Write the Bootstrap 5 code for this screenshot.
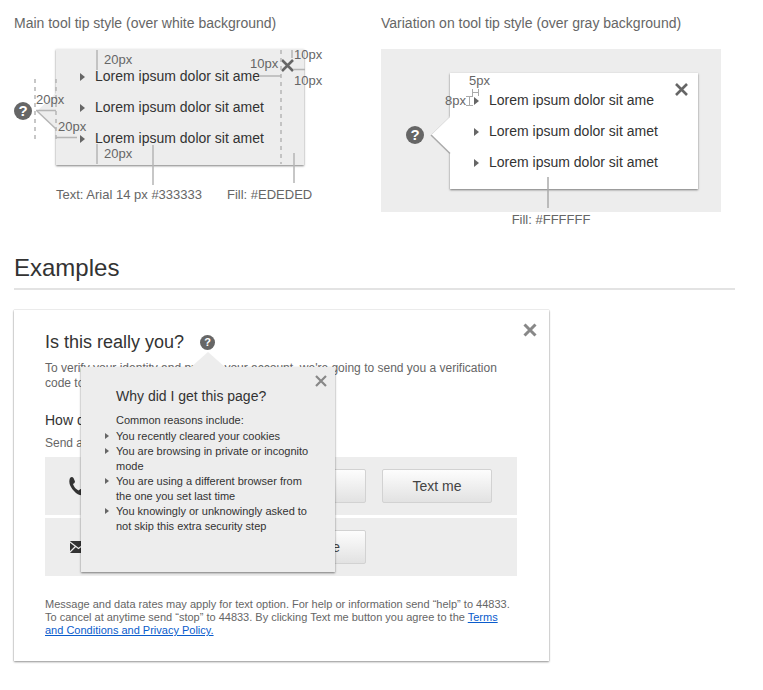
<!DOCTYPE html>
<html lang="en">
<head>
<meta charset="utf-8">
<meta name="viewport" content="width=device-width, initial-scale=1">
<title>Tool tip styles</title>
<link href="https://cdn.jsdelivr.net/npm/bootstrap@5.3.0/dist/css/bootstrap.min.css" rel="stylesheet">
<style>
  body { font-family: "Liberation Sans", Arial, sans-serif; font-size: 14px; line-height: 18px; color: #333; background: #fff; }
  svg { display: block; }
  .page { padding: 14px 28px 24px 14px; }
  .specs { display: grid; grid-template-columns: 1fr 340px; column-gap: 16px; padding-right: 14px; }
  .spec-title { font-size: 14px; line-height: 18px; font-weight: 400; color: #666; margin: 0 0 17px; }
  .annot { font-size: 13px; line-height: 16px; color: #666; white-space: nowrap; }
  .stage-white { min-height: 137px; }
  .stage-gray { background: #ededed; padding: 24px 24px 23px 25px; }
  .stage-gray .help { margin-right: 26px; }
  .captions { margin: 22px 0 0 42px; gap: 25px; }
  .help { width: 18px; height: 18px; padding: 0; border: 0; border-radius: 50%; background: #666; color: #fff; font-weight: 700; font-size: 15px; line-height: 18px; text-align: center; flex: none; }
  .help-sm { width: 15px; height: 15px; font-size: 11px; line-height: 15px; }
  .tip { background: #ededed; box-shadow: 0 1px 2px rgba(0,0,0,.5); }
  .tip-white { background: #fff; }
  .tip-side { padding: 12px 40px 11px 39px; }
  .tip-list { list-style: none; margin: 0; padding: 0; }
  .tip-side li { line-height: 31px; position: relative; white-space: nowrap; }
  .tip-list li::before { content: ""; position: absolute; border-style: solid; border-color: transparent transparent transparent #666; }
  .tip-side li::before { left: -15px; top: 12px; border-width: 4px 0 4px 5px; }
  .arrow-left { position: absolute; left: -20px; top: 42px; }
  .arrow-up { position: absolute; left: 109px; top: -15px; }
  .x-btn { position: absolute; right: 10px; top: 10px; padding: 0; border: 0; background: none; }
  .dialog-box > .x-btn { right: 12px; top: 13px; }
  .why .x-btn { right: 8px; top: 8px; }
  .lines { position: absolute; left: 0; top: 0; overflow: visible; pointer-events: none; }
  .at { position: absolute; }
  .at-top { left: 90px; top: 3px; }
  .at-arrow { left: 22px; top: 43px; }
  .at-indent { left: 44px; top: 70px; }
  .at-bottom { left: 90px; top: 97px; }
  .at-x-left { left: 236px; top: 7px; }
  .at-x-top { left: 280px; top: -2px; }
  .at-x-right { left: 280px; top: 24px; }
  .at-mark-w { left: 88px; top: 24px; }
  .at-mark-h { left: 64px; top: 44px; }
  .examples-title { font-size: 24px; line-height: 30px; font-weight: 400; margin: 25px 0 20px; padding-bottom: 5px; border-bottom: 2px solid #e3e3e3; }
  .dialog-box { max-width: 535px; padding: 21px 32px 24px 31px; background: #fff; box-shadow: 0 1px 2px rgba(0,0,0,.4), 0 0 1px rgba(0,0,0,.3); }
  .dialog-title { font-size: 18px; line-height: 22px; font-weight: 400; margin: 0; }
  .body-copy { font-size: 12px; line-height: 15px; color: #666; margin: 0; }
  .question { font-size: 14px; line-height: 18px; font-weight: 400; margin: 20px 0 7px; }
  .options { gap: 3px; margin-top: 6px; }
  .option { background: #ededed; height: 58px; padding: 0 25px 0 24px; }
  .soft-btn { width: 110px; height: 34px; padding: 0; font-size: 14px; line-height: 18px; color: #444; border: 1px solid #d2d2d2; border-radius: 2px; background: linear-gradient(#fdfdfd, #e2e2e2); }
  .mail-btn { margin-right: 126px; }
  .legal { font-size: 11px; line-height: 13px; color: #666; margin: 22px -24px 0 0; }
  .legal a { color: #0a5ccc; }
  .why { position: absolute; left: 67px; top: 57px; width: 254px; padding: 19px 20px 38px 35px; }
  .why-title { font-size: 14px; line-height: 20px; font-weight: 400; margin: 0 0 7px; }
  .why-copy { font-size: 11px; line-height: 15px; margin: 0 0 1px; color: #333; }
  .why li { position: relative; font-size: 11px; line-height: 15px; }
  .why li::before { left: -11px; top: 4px; border-width: 3px 0 3px 4px; }
</style>
<script src="https://cdn.jsdelivr.net/npm/bootstrap@5.3.0/dist/js/bootstrap.bundle.min.js"></script>
</head>
<body>
<main class="page">
  <div class="specs">
    <section>
      <h2 class="spec-title">Main tool tip style (over white background)</h2>
      <div class="stage-white position-relative">
        <div class="d-flex align-items-center">
          <button class="help mt-2" type="button" aria-label="Help">?</button>
          <div class="tip tip-side position-relative ms-4">
            <svg class="arrow-left" width="21" height="40" viewBox="0 0 21 40" aria-hidden="true"><path d="M21 1L1 20L21 39Z" fill="#ededed"/><path d="M1 20L20 38" stroke="#b5b5b5" stroke-width="1.5" fill="none"/></svg>
            <ul class="tip-list">
              <li>Lorem ipsum dolor sit ame</li>
              <li>Lorem ipsum dolor sit amet</li>
              <li>Lorem ipsum dolor sit amet</li>
            </ul>
            <button class="x-btn" type="button" aria-label="Close"><svg width="13" height="13" viewBox="0 0 13 13"><path d="M1 1L12 12M12 1L1 12" stroke="#666" stroke-width="2.6"/></svg></button>
          </div>
        </div>
        <svg class="lines" width="300" height="146" viewBox="14 49 300 146" fill="none" stroke="#b5b5b5" stroke-width="1.5" aria-hidden="true">
          <path d="M97 50V70M97 144V164M36 110.500H56M56 137.500H77M259 76H281M292 50V58M293 69.500H305M153 145V185M294 153V183"/>
          <path d="M35 79V139M56 79V139M281 50V164" stroke-dasharray="4 4"/>
        </svg>
        <span class="annot at at-top">20px</span>
        <span class="annot at at-arrow">20px</span>
        <span class="annot at at-indent">20px</span>
        <span class="annot at at-bottom">20px</span>
        <span class="annot at at-x-left">10px</span>
        <span class="annot at at-x-top">10px</span>
        <span class="annot at at-x-right">10px</span>
        <div class="annot captions d-flex"><span>Text: Arial 14 px #333333</span><span>Fill: #EDEDED</span></div>
      </div>
    </section>
    <section>
      <h2 class="spec-title">Variation on tool tip style (over gray background)</h2>
      <div class="position-relative">
        <div class="stage-gray d-flex align-items-center">
          <button class="help mt-2" type="button" aria-label="Help">?</button>
          <div class="tip tip-white tip-side position-relative flex-grow-1">
            <svg class="arrow-left" width="21" height="40" viewBox="0 0 21 40" aria-hidden="true"><path d="M21 1L1 20L21 39Z" fill="#fff"/><path d="M1 20L20 38.500" stroke="#aaa" stroke-width="1.5" fill="none"/><path d="M1 20L20 1.500" stroke="#ddd" fill="none"/></svg>
            <ul class="tip-list">
              <li>Lorem ipsum dolor sit ame</li>
              <li>Lorem ipsum dolor sit amet</li>
              <li>Lorem ipsum dolor sit amet</li>
            </ul>
            <button class="x-btn" type="button" aria-label="Close"><svg width="13" height="13" viewBox="0 0 13 13"><path d="M1 1L12 12M12 1L1 12" stroke="#666" stroke-width="2.6"/></svg></button>
          </div>
        </div>
        <svg class="lines" width="340" height="162" viewBox="381 49 340 162" fill="none" stroke="#aaa" aria-hidden="true">
          <path d="M548 177V208" stroke-width="1.500"/>
          <path d="M472.500 89V96M478.500 89V96M472.500 92.500H478.500M466 96.500H473M466 105.500H473M469.500 96.500V105.500"/>
        </svg>
        <span class="annot at at-mark-w">5px</span>
        <span class="annot at at-mark-h">8px</span>
        <div class="annot text-center">Fill: #FFFFFF</div>
      </div>
    </section>
  </div>

  <h1 class="examples-title">Examples</h1>

  <section class="dialog-box position-relative">
    <button class="x-btn" type="button" aria-label="Close dialog"><svg width="14" height="14" viewBox="0 0 14 14"><path d="M1.500 1.500L12.500 12.500M12.500 1.500L1.500 12.500" stroke="#888" stroke-width="3"/></svg></button>
    <div class="d-flex align-items-center gap-3">
      <h2 class="dialog-title">Is this really you?</h2>
      <button class="help help-sm" type="button" aria-label="Why did I get this page?">?</button>
    </div>
    <p class="body-copy mt-2">To verify your identity and protect your account, we're going to send you a verification<br>code to</p>
    <h3 class="question">How do</h3>
    <p class="body-copy">Send a</p>
    <div class="options d-grid">
      <div class="option d-flex align-items-center">
        <svg width="18" height="19" viewBox="0 0 18 19" aria-hidden="true"><path d="M1 1Q3 -1 4.500 1L6 4.500Q6 6 4 7Q5.500 11.500 9.500 13.500L11.500 12Q13 11.500 16 14.500Q17 16 14.500 18Q10 19.500 5 14Q-1.500 7 1 1Z" fill="#333"/></svg>
        <button class="btn soft-btn ms-auto me-3" type="button" aria-label="Call me"></button>
        <button class="btn soft-btn" type="button">Text me</button>
      </div>
      <div class="option d-flex align-items-center">
        <svg width="18" height="12" viewBox="0 0 18 12" aria-hidden="true"><rect x="1" width="17" height="12" rx="1" fill="#333"/><path d="M1 1L9.500 7.500L18 1M1 11L6.500 5.500M18 11L12.500 5.500" stroke="#ededed" stroke-width="1.200" fill="none"/></svg>
        <button class="btn soft-btn mail-btn ms-auto" type="button">Email me</button>
      </div>
    </div>
    <p class="legal">Message and data rates may apply for text option. For help or information send “help” to 44833.<br>To cancel at anytime send “stop” to 44833. By clicking Text me button you agree to the <a href="#terms">Terms<br>and Conditions and Privacy Policy.</a></p>

    <aside class="tip why">
      <svg class="arrow-up" width="36" height="16" viewBox="0 0 36 16" aria-hidden="true"><path d="M0 16L18 0L36 16Z" fill="#ededed"/></svg>
      <button class="x-btn" type="button" aria-label="Close tip"><svg width="12" height="12" viewBox="0 0 12 12"><path d="M1 1L11 11M11 1L1 11" stroke="#888" stroke-width="2.200"/></svg></button>
      <h3 class="why-title">Why did I get this page?</h3>
      <p class="why-copy">Common reasons include:</p>
      <ul class="tip-list">
        <li>You recently cleared your cookies</li>
        <li>You are browsing in private or incognito mode</li>
        <li>You are using a different browser from the one you set last time</li>
        <li>You knowingly or unknowingly asked to not skip this extra security step</li>
      </ul>
    </aside>
  </section>
</main>
</body>
</html>
